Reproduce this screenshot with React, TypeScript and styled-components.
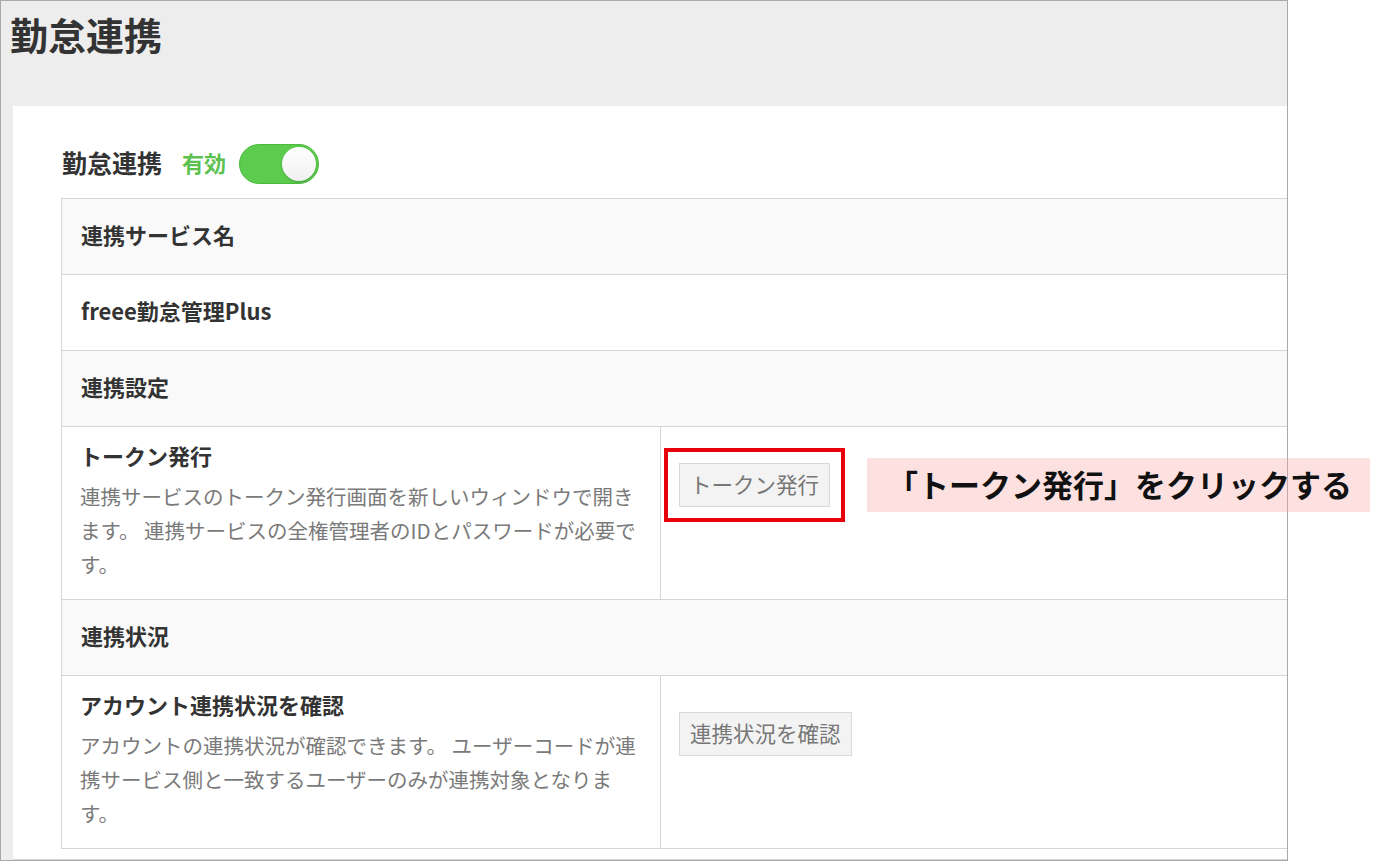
import React from 'react';
import styled, { createGlobalStyle } from 'styled-components';

const GlobalStyle = createGlobalStyle`
    html, body {
        margin: 0;
        padding: 0;
        background: #fff;
    }
    body {
        font-family: 'Noto Sans CJK JP', 'Noto Sans', sans-serif;
        color: #333;
    }
`;

type SettingRowProps = {
    title: string;
    description: string;
    button: string;
    highlighted?: boolean;
};

const SettingRow = ({ title, description, button, highlighted }: SettingRowProps) => (
    <SplitRow>
        <InfoCell>
            <CellTitle>{title}</CellTitle>
            <Description>{description}</Description>
        </InfoCell>
        <ActionCell>
            <ButtonWrap highlighted={highlighted}>
                <GrayButton>{button}</GrayButton>
            </ButtonWrap>
        </ActionCell>
    </SplitRow>
);

export default function App() {
    return (
        <Page>
            <GlobalStyle />
            <Frame>
                <PageHeader>
                    <PageTitle>勤怠連携</PageTitle>
                </PageHeader>
                <Card>
                    <SectionHeading>
                        <SectionTitle>勤怠連携</SectionTitle>
                        <StatusLabel>有効</StatusLabel>
                        <Toggle>
                            <Knob />
                        </Toggle>
                    </SectionHeading>
                    <Table>
                        <HeadRow>
                            <CellTitle>連携サービス名</CellTitle>
                        </HeadRow>
                        <PlainRow>
                            <CellTitle>freee勤怠管理Plus</CellTitle>
                        </PlainRow>
                        <HeadRow>
                            <CellTitle>連携設定</CellTitle>
                        </HeadRow>
                        <SettingRow
                            title="トークン発行"
                            description="連携サービスのトークン発行画面を新しいウィンドウで開きます。 連携サービスの全権管理者のIDとパスワードが必要です。"
                            button="トークン発行"
                            highlighted
                        />
                        <HeadRow>
                            <CellTitle>連携状況</CellTitle>
                        </HeadRow>
                        <SettingRow
                            title="アカウント連携状況を確認"
                            description="アカウントの連携状況が確認できます。 ユーザーコードが連携サービス側と一致するユーザーのみが連携対象となります。"
                            button="連携状況を確認"
                        />
                    </Table>
                </Card>
            </Frame>
            <Callout>「トークン発行」をクリックする</Callout>
        </Page>
    );
}

const Page = styled.div`
    position: relative;
    width: 1376px;
    height: 862px;
    overflow: hidden;
`;

const Frame = styled.div`
    box-sizing: border-box;
    width: 1288px;
    height: 861px;
    border: 1px solid #a9a9a9;
    background-color: #ededed;
    display: flex;
    flex-direction: column;
    overflow: hidden;
`;

const PageHeader = styled.div`
    height: 105px;
    flex-shrink: 0;
    box-sizing: border-box;
    padding: 9px 0 0 9px;
`;

const PageTitle = styled.h1`
    margin: 0;
    font-size: 38px;
    line-height: 48px;
    font-weight: bold;
    color: #333;
`;

const Card = styled.div`
    flex: 1;
    width: 1420px;
    margin-left: 12px;
    box-sizing: border-box;
    padding-left: 48px;
    background-color: #fff;
    border-bottom: 1px solid #d4d4d4;
`;

const SectionHeading = styled.div`
    display: flex;
    align-items: center;
    height: 40px;
    padding-top: 38px;
    margin-bottom: 14px;
`;

const SectionTitle = styled.span`
    font-size: 25px;
    line-height: 36px;
    font-weight: bold;
    color: #333;
    margin: 0 0 4px 1px;
`;

const StatusLabel = styled.span`
    font-size: 22px;
    line-height: 36px;
    font-weight: bold;
    color: #5cc14e;
    margin: 0 0 4px 20px;
`;

const Toggle = styled.span`
    position: relative;
    box-sizing: border-box;
    width: 80px;
    height: 40px;
    margin-left: 13px;
    border-radius: 20px;
    background-color: #5ccc4e;
    border: 1px solid #4cb940;
`;

const Knob = styled.span`
    position: absolute;
    top: 2px;
    right: 2px;
    width: 34px;
    height: 34px;
    border-radius: 50%;
    background: linear-gradient(#ffffff, #f0f0f0);
    box-shadow: 0 1px 2px rgba(0, 0, 0, 0.25);
`;

const Table = styled.div`
    width: 1320px;
    border: 1px solid #d5d5d5;
    display: flex;
    flex-direction: column;
`;

const PlainRow = styled.div`
    height: 76px;
    box-sizing: border-box;
    padding: 0 19px 6px;
    display: flex;
    align-items: center;
    background-color: #fff;
    border-bottom: 1px solid #d5d5d5;
`;

const HeadRow = styled(PlainRow)`
    background-color: #f9f9f9;
`;

const SplitRow = styled.div`
    display: grid;
    grid-template-columns: 599px 1fr;
    border-bottom: 1px solid #d5d5d5;

    &:last-child {
        border-bottom: none;
    }
`;

const InfoCell = styled.div`
    padding: 11px 19px 18px 18px;
    border-right: 1px solid #d5d5d5;
`;

const CellTitle = styled.div`
    font-size: 22px;
    line-height: 34px;
    font-weight: bold;
    color: #333;
`;

const Description = styled.p`
    margin: 7px 0 0;
    font-size: 20.5px;
    line-height: 34px;
    color: #7a7a7a;
`;

const ActionCell = styled.div`
    padding: 36px 18px;
`;

const ButtonWrap = styled.div<{ highlighted?: boolean }>`
    display: inline-block;
    outline: ${(props) => (props.highlighted ? '4px solid #e8000b' : 'none')};
    outline-offset: 11px;
`;

const GrayButton = styled.button`
    display: block;
    height: 44px;
    padding: 0 10px 3px;
    font-family: 'Noto Sans CJK JP', sans-serif;
    font-size: 21.5px;
    color: #777;
    background-color: #f3f3f3;
    border: 1px solid #d9d9d9;
    border-radius: 0;
`;

const Callout = styled.div`
    position: absolute;
    left: 867px;
    top: 458px;
    width: 503px;
    height: 54px;
    box-sizing: border-box;
    padding: 0 0 4px 20px;
    display: flex;
    align-items: center;
    background-color: rgba(248, 168, 168, 0.34);
    font-size: 31px;
    font-weight: bold;
    color: #111;
    white-space: nowrap;
`;
